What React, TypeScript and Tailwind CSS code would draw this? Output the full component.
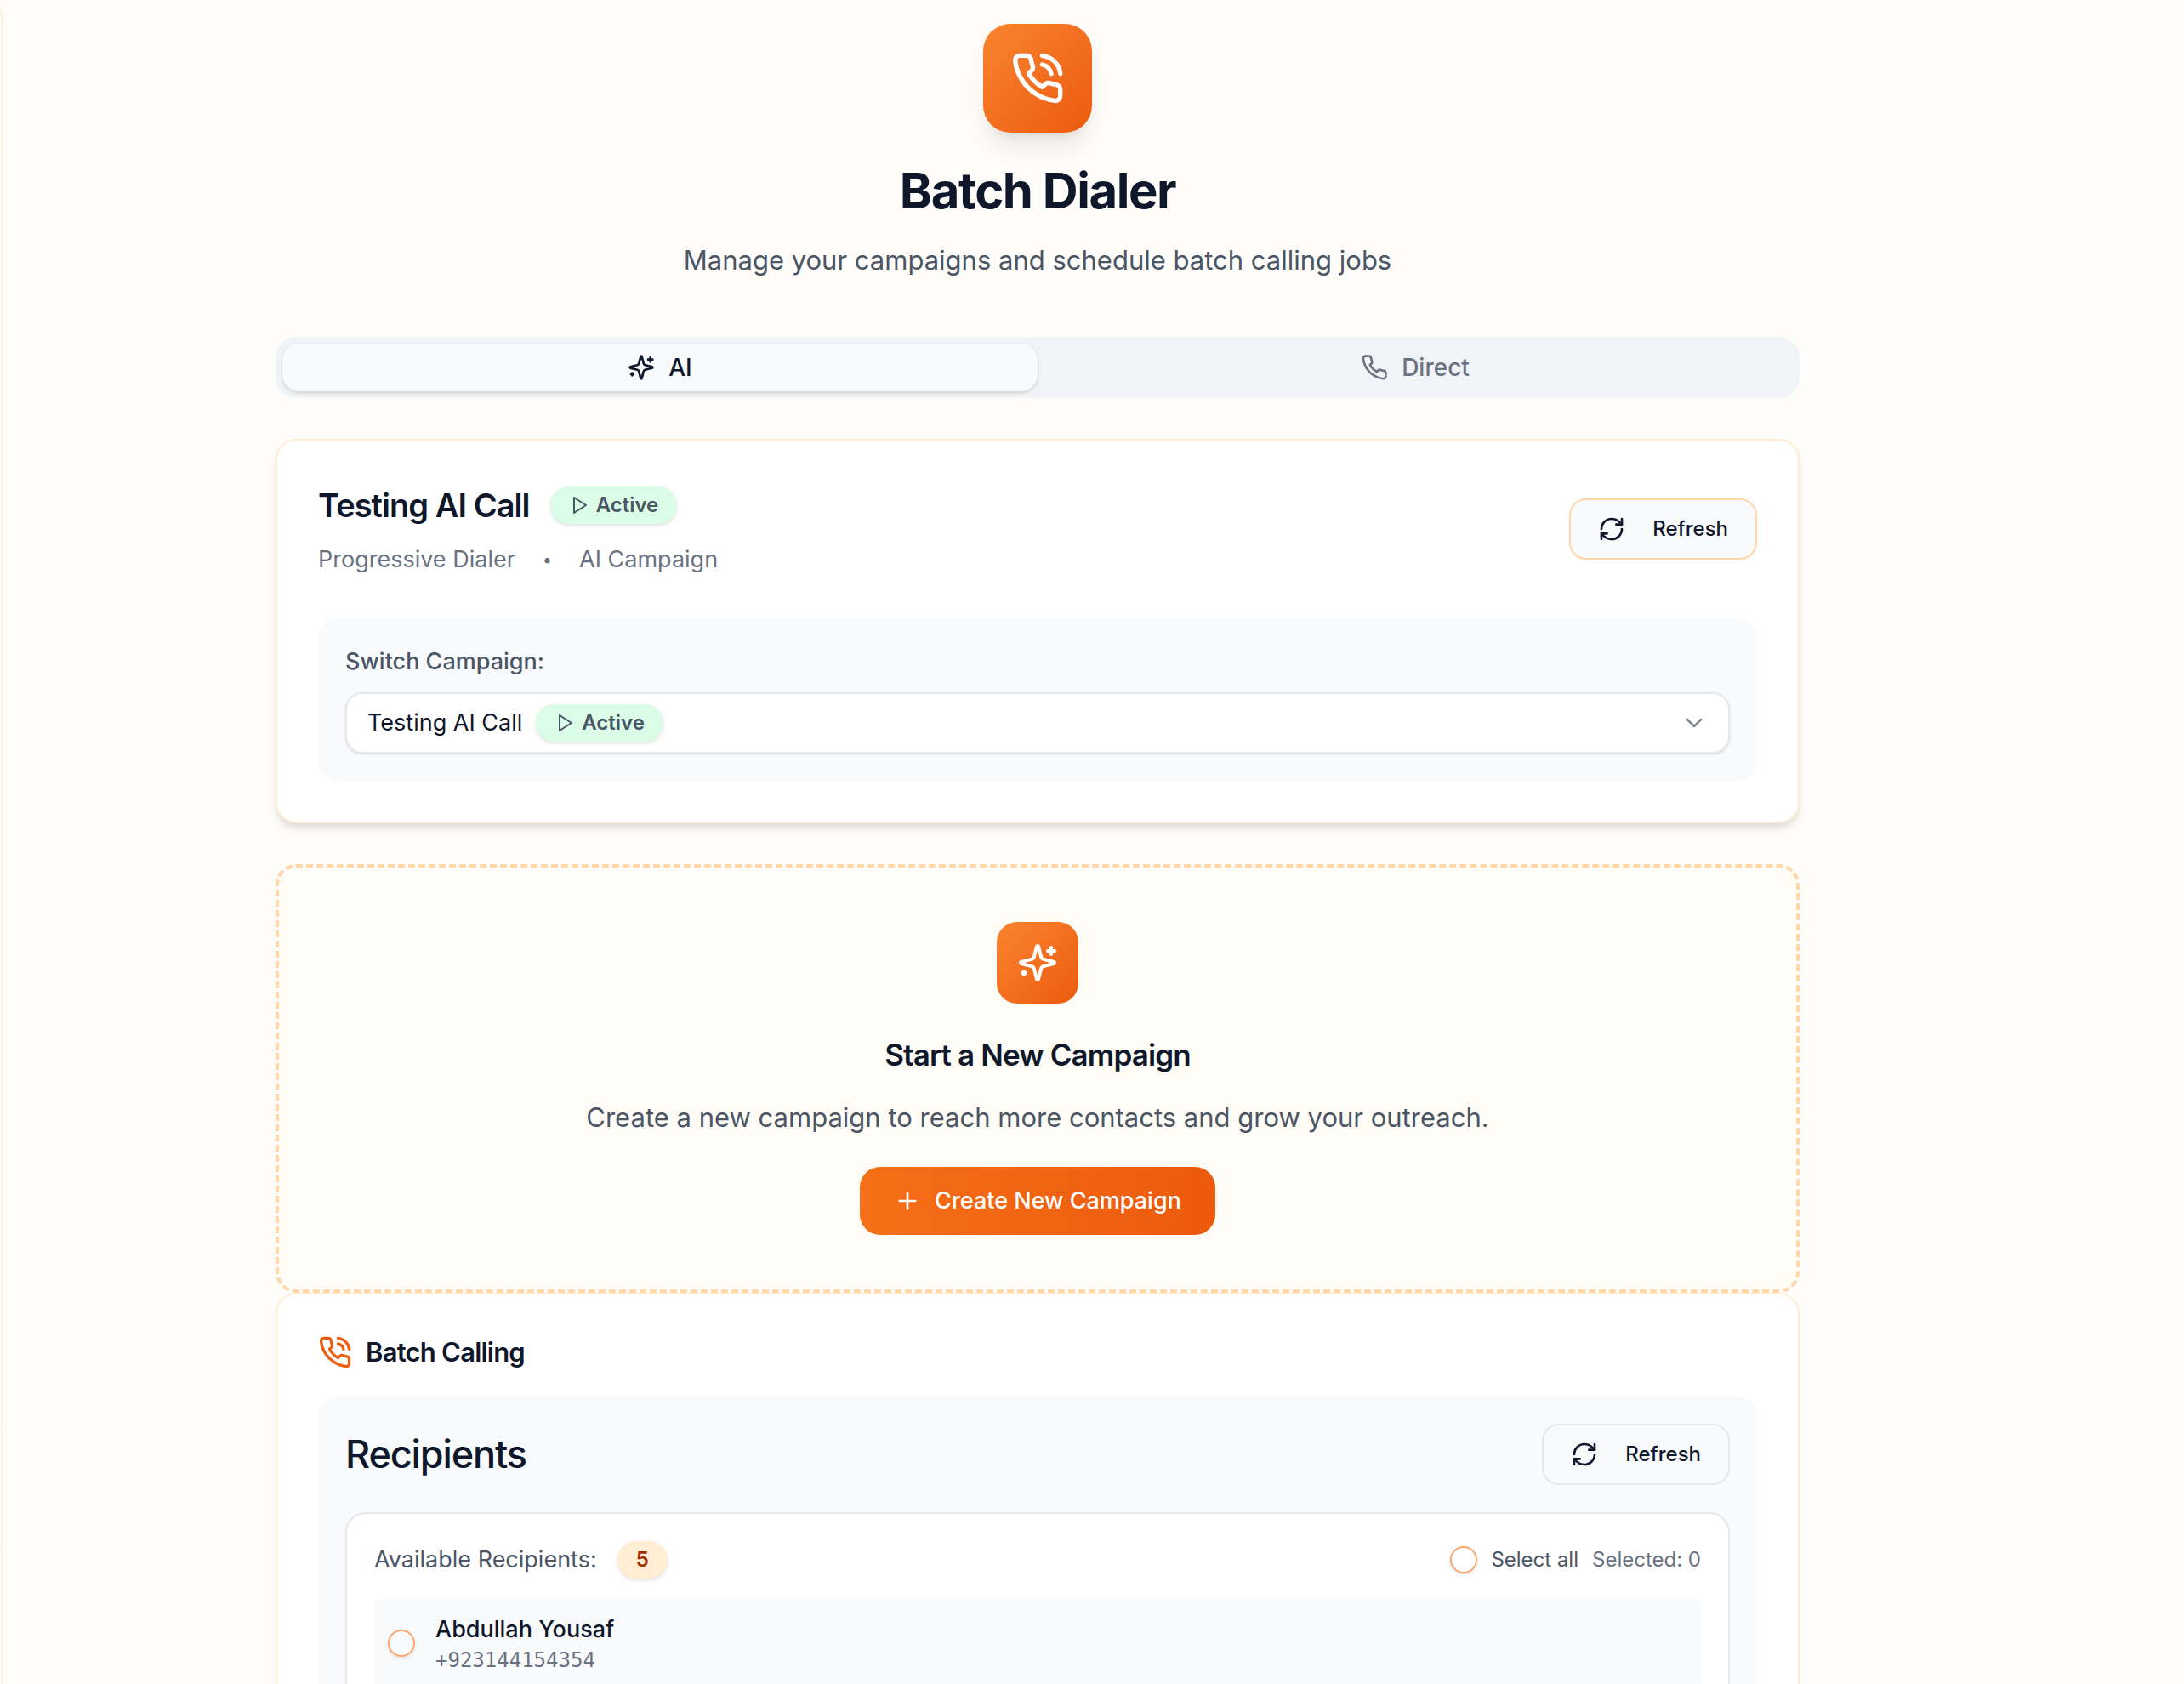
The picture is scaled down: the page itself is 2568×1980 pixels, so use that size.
import { ChevronDown, Plus, RefreshCw } from "lucide-react";
import { useState } from "react";
import type { ReactNode } from "react";

function Icon({ className, children }: { className: string; children: ReactNode }) {
  return (
    <svg
      viewBox="0 0 24 24"
      fill="none"
      stroke="currentColor"
      strokeWidth={2}
      strokeLinecap="round"
      strokeLinejoin="round"
      aria-hidden="true"
      className={className}
    >
      {children}
    </svg>
  );
}

const handset =
  "M22 16.92v3a2 2 0 0 1-2.18 2 19.79 19.79 0 0 1-8.63-3.07 19.5 19.5 0 0 1-6-6 19.79 19.79 0 0 1-3.07-8.67A2 2 0 0 1 4.11 2h3a2 2 0 0 1 2 1.72 12.84 12.84 0 0 0 .7 2.81 2 2 0 0 1-.45 2.11L8.09 9.91a16 16 0 0 0 6 6l1.27-1.27a2 2 0 0 1 2.11-.45 12.84 12.84 0 0 0 2.81.7A2 2 0 0 1 22 16.92z";

function Phone({ className }: { className: string }) {
  return (
    <Icon className={className}>
      <path d={handset} />
    </Icon>
  );
}

function PhoneCall({ className }: { className: string }) {
  return (
    <Icon className={className}>
      <path d={handset} />
      <path d="M14.05 2a9 9 0 0 1 8 7.94" />
      <path d="M14.05 6A5 5 0 0 1 18 10" />
    </Icon>
  );
}

function Sparkles({ className }: { className: string }) {
  return (
    <Icon className={className}>
      <path d="M9.937 15.5A2 2 0 0 0 8.5 14.063l-6.135-1.582a.5.5 0 0 1 0-.962L8.5 9.936A2 2 0 0 0 9.937 8.5l1.582-6.135a.5.5 0 0 1 .963 0L14.063 8.5A2 2 0 0 0 15.5 9.937l6.135 1.581a.5.5 0 0 1 0 .964L15.5 14.063a2 2 0 0 0-1.437 1.437l-1.582 6.135a.5.5 0 0 1-.963 0z" />
      <path d="M20 3v4" />
      <path d="M22 5h-4" />
      <path d="M4 17v2" />
      <path d="M5 18H3" />
    </Icon>
  );
}

function StatusBadge() {
  return (
    <span className="inline-flex h-11 items-center gap-2 rounded-full border-2 border-green-100 bg-green-100 px-5 text-2xl leading-8 font-semibold text-gray-600 shadow-[0_2px_4px_rgba(0,0,0,0.12)]">
      <Icon className="size-6">
        <polygon points="6 3 20 12 6 21 6 3" />
      </Icon>
      Active
    </span>
  );
}

function RefreshButton({ tone }: { tone: "orange" | "gray" }) {
  return (
    <button
      type="button"
      className={
        "flex h-[72px] shrink-0 items-center gap-8 rounded-[20px] border-2 bg-slate-50 px-8 text-2xl font-medium text-slate-900 " +
        (tone === "orange" ? "border-orange-200" : "border-gray-200")
      }
    >
      <RefreshCw className="size-8" />
      Refresh
    </button>
  );
}

const checkClass =
  "size-8 shrink-0 appearance-none rounded-full border-2 border-[#fca56b] bg-transparent shadow-[0_2px_4px_rgba(0,0,0,0.1)] checked:bg-orange-500";

export default function App() {
  const [tab, setTab] = useState("ai");
  const [selected, setSelected] = useState(false);

  return (
    <div className="flex h-screen overflow-hidden bg-[#fffdf9] font-[Inter,sans-serif] text-slate-900">
      <aside className="-ml-40 flex w-41 shrink-0 flex-col rounded-tr-3xl border-r-2 border-orange-100">
        <div className="h-[171px] border-b border-orange-100" />
        <div className="flex-1" />
        <div className="h-[147px] border-y border-gray-200" />
        <div className="h-[159px]" />
      </aside>
      <div className="h-full flex-1 pt-7 pr-[132px]">
        <main className="mx-auto max-w-[1792px]">
          <header className="flex flex-col items-center">
            <div className="flex size-32 items-center justify-center rounded-[32px] bg-linear-to-br from-[#f9842f] to-[#ec5a0c] text-white shadow-[0_20px_30px_-6px_rgba(0,0,0,0.1),0_8px_12px_-8px_rgba(0,0,0,0.1)]">
              <PhoneCall className="size-16" />
            </div>
            <h1 className="mt-8 text-[58px] leading-[72px] font-bold tracking-tight">Batch Dialer</h1>
            <p className="mt-5 text-[31px] leading-[52px] text-gray-600">
              Manage your campaigns and schedule batch calling jobs
            </p>
          </header>

          <div role="tablist" className="mt-16 grid h-[72px] grid-cols-2 rounded-3xl bg-[#f0f4f8] p-2 text-[28px] font-medium">
            <button
              type="button"
              role="tab"
              aria-selected={tab === "ai"}
              onClick={() => setTab("ai")}
              className="flex items-center justify-center gap-4 rounded-[20px] bg-slate-50 text-slate-900 shadow-[0_2px_4px_rgba(0,0,0,0.15)]"
            >
              <Sparkles className="size-8" />
              AI
            </button>
            <button
              type="button"
              role="tab"
              aria-selected={tab === "direct"}
              onClick={() => setTab("direct")}
              className="flex items-center justify-center gap-4 rounded-[20px] text-gray-500"
            >
              <Phone className="size-8" />
              Direct
            </button>
          </div>

          <section className="mt-12 rounded-3xl border-2 border-orange-100 bg-white p-12 shadow-[0_8px_12px_-2px_rgba(0,0,0,0.1),0_4px_8px_-4px_rgba(0,0,0,0.1)]">
            <div className="flex items-center justify-between">
              <div>
                <div className="flex items-center gap-6">
                  <h2 className="text-[38px] leading-14 font-semibold tracking-tight">Testing AI Call</h2>
                  <StatusBadge />
                </div>
                <p className="mt-4 flex items-center gap-8 text-[27px] leading-10 text-gray-500">
                  <span>Progressive Dialer</span>
                  <span className="text-xl">•</span>
                  <span>AI Campaign</span>
                </p>
              </div>
              <RefreshButton tone="orange" />
            </div>
            <div className="mt-12 rounded-3xl bg-slate-50 p-8">
              <span id="switch-label" className="block text-[27px] leading-10 font-medium text-gray-600">
                Switch Campaign:
              </span>
              <button
                type="button"
                role="combobox"
                aria-expanded={false}
                aria-controls="campaign-list"
                aria-labelledby="switch-label"
                className="mt-4 flex h-[72px] w-full items-center gap-4 rounded-[20px] border-2 border-gray-200 bg-white px-6 text-[27px] shadow-sm"
              >
                <span>Testing AI Call</span>
                <StatusBadge />
                <ChevronDown className="ml-auto size-8 opacity-50" />
              </button>
            </div>
          </section>

          <section className="mt-12 flex flex-col items-center rounded-3xl border-4 border-dashed border-orange-200 bg-linear-to-r from-[#fffcf8] to-[#fffdf5] py-16">
            <div className="flex size-24 items-center justify-center rounded-3xl bg-linear-to-br from-[#f9842f] to-[#ec5a0c] text-white">
              <Sparkles className="size-12" />
            </div>
            <h2 className="mt-8 text-[35px] leading-14 font-semibold tracking-tight">Start a New Campaign</h2>
            <p className="mt-5 text-[31px] leading-[52px] text-gray-600">
              Create a new campaign to reach more contacts and grow your outreach.
            </p>
            <button
              type="button"
              className="mt-8 flex h-20 items-center gap-4 rounded-3xl bg-linear-to-r from-[#f56f18] to-[#ec5a0c] px-10 text-[27px] font-medium text-white"
            >
              <Plus className="size-8" />
              Create New Campaign
            </button>
          </section>

          <section className="rounded-3xl border-2 border-orange-100 bg-white p-12">
            <div className="flex items-center gap-4">
              <PhoneCall className="size-10 text-[#ee5e10]" />
              <h2 className="text-[31px] leading-10 font-semibold tracking-tight">Batch Calling</h2>
            </div>
            <div className="mt-8 rounded-3xl bg-slate-50 p-8">
              <div className="flex items-center justify-between">
                <h3 className="text-[45px] leading-16 font-medium tracking-tight">Recipients</h3>
                <RefreshButton tone="gray" />
              </div>
              <div className="mt-8 rounded-3xl border-2 border-gray-200 bg-white p-8">
                <div className="flex items-center justify-between">
                  <div className="flex items-center gap-6 text-[27px] leading-10 text-gray-600">
                    Available Recipients:
                    <span className="flex h-11 items-center rounded-full border-2 border-orange-100 bg-orange-100 px-5 text-2xl font-semibold text-orange-800 shadow-[0_2px_4px_rgba(0,0,0,0.12)]">
                      5
                    </span>
                  </div>
                  <div className="flex items-center gap-4 text-2xl text-gray-500">
                    <label className="flex items-center gap-4 text-gray-600">
                      <input type="checkbox" className={checkClass} checked={selected} onChange={() => setSelected(!selected)} />
                      Select all
                    </label>
                    <span>Selected: {selected ? 1 : 0}</span>
                  </div>
                </div>
                <label className="mt-6 flex items-center gap-6 rounded-lg bg-slate-50 p-4">
                  <input type="checkbox" className={checkClass} checked={selected} onChange={() => setSelected(!selected)} />
                  <span>
                    <span className="block text-[27px] leading-10 font-medium">Abdullah Yousaf</span>
                    <span className="block font-['DejaVu_Sans_Mono',monospace] text-2xl leading-8 text-gray-500">
                      +923144154354
                    </span>
                  </span>
                </label>
              </div>
            </div>
          </section>
        </main>
      </div>
    </div>
  );
}
